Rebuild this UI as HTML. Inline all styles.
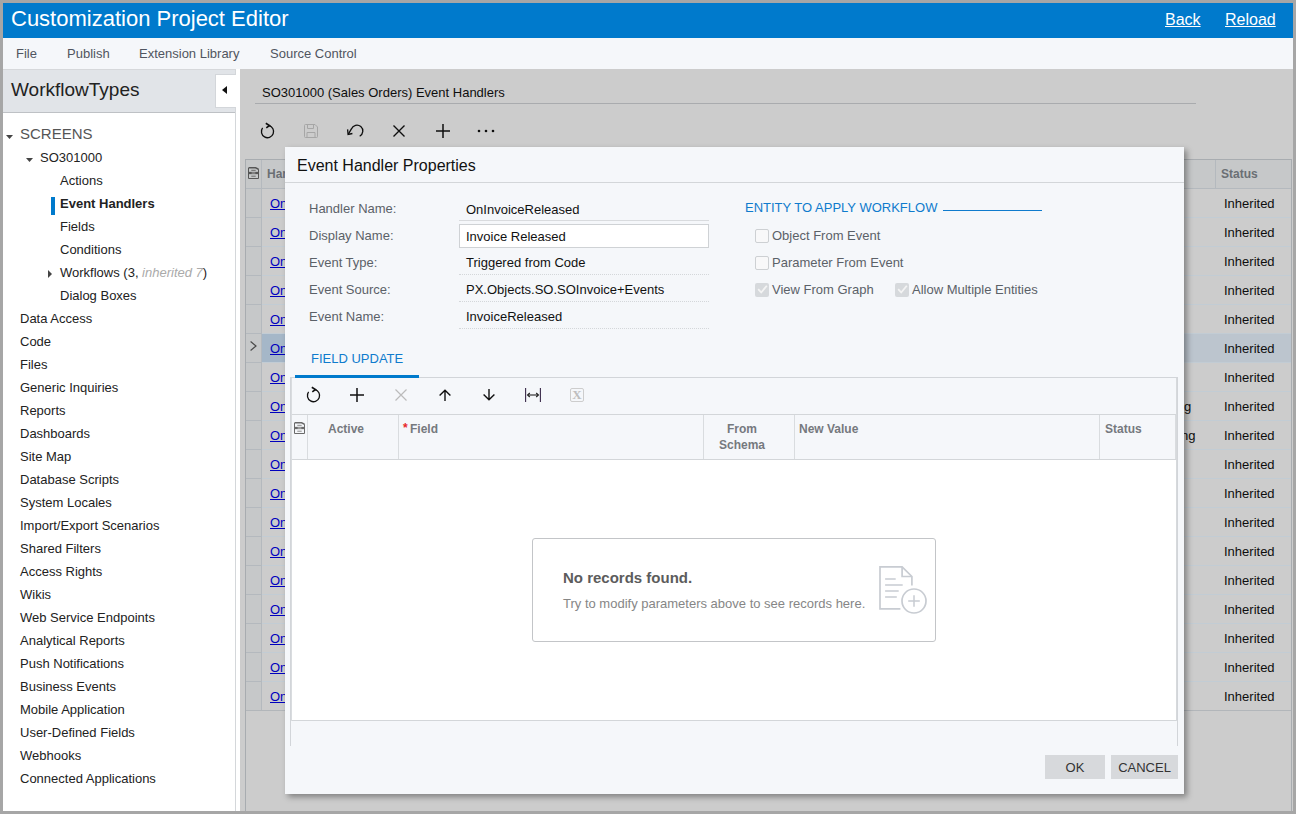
<!DOCTYPE html>
<html>
<head>
<meta charset="utf-8">
<title>Customization Project Editor</title>
<style>
*{box-sizing:border-box;margin:0;padding:0}
html,body{width:1296px;height:814px;overflow:hidden;background:#a6a6a6;font-family:"Liberation Sans",sans-serif;font-size:13px;color:#222}
div,span,a{position:absolute;white-space:nowrap}
svg{position:absolute;overflow:visible}
#app{left:3px;top:3px;width:1290px;height:808px;background:#fff;overflow:hidden}
#hdr{left:0;top:0;width:1290px;height:35px;background:#007acc;color:#fff}
#hdr .t{left:8px;top:3px;font-size:22px;line-height:26px}
#hdr a{top:7px;font-size:16px;line-height:20px;color:#fff;text-decoration:underline}
#menu{left:0;top:35px;width:1290px;height:31px;background:#f5f7fa}
#menu span{top:8px;font-size:13px;line-height:15px;color:#505560}
#side{left:0;top:66px;width:233px;height:742px;background:#fff;border-right:1px solid #d4d7da}
#sidehdr{left:0;top:0;width:232px;height:44px;background:#e1e4e8;border-top:1px solid #d6d8db;border-bottom:1px solid #bec1c5}
#sidehdr .t{left:8px;top:8px;font-size:19px;line-height:24px;color:#222}
#collapse{left:212px;top:4px;width:21px;height:34px;background:#fff;border:1px solid #d3d6da;border-right:none}
.tri-l{left:6px;top:11px;width:0;height:0;border-top:4px solid transparent;border-bottom:4px solid transparent;border-right:5px solid #111}
.ti{font-size:13px;line-height:15px;color:#222}
.tri-d{width:0;height:0;border-left:3.5px solid transparent;border-right:3.5px solid transparent;border-top:4px solid #444}
.tri-r{width:0;height:0;border-top:4px solid transparent;border-bottom:4px solid transparent;border-left:4px solid #444}
#split{left:233px;top:66px;width:4px;height:742px;background:#fff}
#main{left:237px;top:66px;width:1053px;height:742px;background:#ccc;overflow:hidden}
#dim{left:237px;top:66px;width:1053px;height:742px;background:rgba(0,0,0,0.2)}

#main .ttl{font-size:13px;line-height:15px;color:#0e0e0e}
.gh{background:#f7f8f9;border-bottom:1px solid #d5d9dd}
.ghc{font-size:12px;font-weight:bold;color:#6a6f74;line-height:14px}
.row{left:6px;width:1045px;height:29px;border-bottom:1px solid #d9e3ea}
.lnk{color:#0000be;text-decoration:underline;font-size:13px;line-height:15px}
.st{font-size:13px;line-height:15px;color:#0e0e0e}

#dlg{left:282px;top:144px;width:899px;height:647px;background:#f5f7fa;box-shadow:3px 3px 6px rgba(0,0,0,.37)}
#dlg .dt{left:12px;top:9px;font-size:16px;line-height:20px;color:#111}
.lbl{font-size:13px;line-height:15px;color:#5b6168}
.val{font-size:13px;line-height:15px;color:#111}
.cb{width:14px;height:14px;border:1px solid #cdd0d3;border-radius:2px;background:#f8f8f9}
.cbd{width:14px;height:14px;border-radius:2px;background:#d6d9dc}
.hc{font-size:12px;font-weight:bold;color:#75797e;line-height:16px}
.btn{height:24px;background:#d7d9dc;font-size:13px;line-height:26px;color:#333;text-align:center}
</style>
</head>
<body>
<div id="app">
<div id="hdr"><div class="t">Customization Project Editor</div><a style="left:1162px">Back</a><a style="left:1222px">Reload</a></div>
<div id="menu"><span style="left:13px">File</span><span style="left:64px">Publish</span><span style="left:136px">Extension Library</span><span style="left:267px">Source Control</span></div>
<div id="side"><div id="sidehdr"><div class="t">WorkflowTypes</div><div id="collapse"><div class="tri-l"></div></div></div></div>
<svg style="left:3px;top:132px" width="7" height="4" viewBox="0 0 7 4"><path d="M0 0H7L3.5 4Z" fill="#444"/></svg>
<div class="ti" style="left:17px;top:122px;font-size:15px;line-height:17px;color:#555">SCREENS</div>
<svg style="left:23px;top:155px" width="7" height="4" viewBox="0 0 7 4"><path d="M0 0H7L3.5 4Z" fill="#444"/></svg>
<div class="ti " style="left:37px;top:147px;">SO301000</div>
<div class="ti " style="left:57px;top:170px;">Actions</div>
<div style="left:48px;top:194px;width:4px;height:18px;background:#007acc"></div>
<div class="ti " style="left:57px;top:193px;font-weight:bold">Event Handlers</div>
<div class="ti " style="left:57px;top:216px;">Fields</div>
<div class="ti " style="left:57px;top:239px;">Conditions</div>
<div class="tri-r" style="left:45px;top:267px"></div>
<div class="ti " style="left:57px;top:262px;">Workflows (3, <i style="color:#aaa">inherited 7</i>)</div>
<div class="ti " style="left:57px;top:285px;">Dialog Boxes</div>
<div class="ti " style="left:17px;top:308px;">Data Access</div>
<div class="ti " style="left:17px;top:331px;">Code</div>
<div class="ti " style="left:17px;top:354px;">Files</div>
<div class="ti " style="left:17px;top:377px;">Generic Inquiries</div>
<div class="ti " style="left:17px;top:400px;">Reports</div>
<div class="ti " style="left:17px;top:423px;">Dashboards</div>
<div class="ti " style="left:17px;top:446px;">Site Map</div>
<div class="ti " style="left:17px;top:469px;">Database Scripts</div>
<div class="ti " style="left:17px;top:492px;">System Locales</div>
<div class="ti " style="left:17px;top:515px;">Import/Export Scenarios</div>
<div class="ti " style="left:17px;top:538px;">Shared Filters</div>
<div class="ti " style="left:17px;top:561px;">Access Rights</div>
<div class="ti " style="left:17px;top:584px;">Wikis</div>
<div class="ti " style="left:17px;top:607px;">Web Service Endpoints</div>
<div class="ti " style="left:17px;top:630px;">Analytical Reports</div>
<div class="ti " style="left:17px;top:653px;">Push Notifications</div>
<div class="ti " style="left:17px;top:676px;">Business Events</div>
<div class="ti " style="left:17px;top:699px;">Mobile Application</div>
<div class="ti " style="left:17px;top:722px;">User-Defined Fields</div>
<div class="ti " style="left:17px;top:745px;">Webhooks</div>
<div class="ti " style="left:17px;top:768px;">Connected Applications</div>
<div id="split"></div>
<div id="main">
<div class="ttl" style="left:22px;top:16px">SO301000 (Sales Orders) Event Handlers</div>
<div style="left:15px;top:34px;width:941px;height:1px;background:#a9abae"></div>
<svg style="left:20px;top:54px" width="16" height="16" viewBox="0 0 16 16" fill="none" stroke="#0e0e0e" stroke-width="1.3"><path d="M8.98 2.68 A6.1 6.1 0 1 1 2.59 4.98"/><path d="M5.8 0.3 L9.5 2.5 L6.3 4.8" stroke-width="1.6" stroke-linejoin="miter"/></svg>
<svg style="left:64px;top:55px" width="14" height="14" viewBox="0 0 14 14" fill="none" stroke="#a6a6a6" stroke-width="1"><path d="M0.5 1.5Q0.5 0.5 1.5 0.5H11L13.5 3V12.5Q13.5 13.5 12.5 13.5H1.5Q0.5 13.5 0.5 12.5Z"/><path d="M3.5 0.5V4.5H9.5V0.5M3 13.5V8.5H11V13.5"/></svg>
<svg style="left:107px;top:55px" width="17" height="14" viewBox="0 0 17 14" fill="none" stroke="#0e0e0e" stroke-width="1.3"><path d="M1.2 10.4 L4.4 4.9 A5.9 5.9 0 1 1 12.7 12.2"/><path d="M0.6 5.4 L1.1 10.5 L5.4 9.5"/></svg>
<svg style="left:153px;top:56px" width="12" height="12" viewBox="0 0 12 12" stroke="#0e0e0e" stroke-width="1.35"><path d="M0.5 0.5L11.5 11.5M11.5 0.5L0.5 11.5"/></svg>
<svg style="left:196px;top:55px" width="14" height="14" viewBox="0 0 14 14" stroke="#0e0e0e" stroke-width="1.5"><path d="M7 0V14M0 7H14"/></svg>
<svg style="left:237px;top:60px" width="18" height="4" viewBox="0 0 18 4" fill="#0e0e0e"><circle cx="2" cy="2" r="1.3"/><circle cx="9" cy="2" r="1.3"/><circle cx="16" cy="2" r="1.3"/></svg>
<div style="left:5px;top:90px;width:1047px;height:660px;border:1px solid #a8acb0;border-bottom:none"></div>
<div style="left:6px;top:91px;width:1045px;height:28px;background:#c6c8c9"></div>
<div style="left:6px;top:119px;width:15px;height:522px;background:#c6c8c9"></div>
<div style="left:6px;top:119px;width:1045px;height:1px;background:#b4b9be"></div>
<svg style="left:8px;top:98px" width="11" height="12" viewBox="0 0 11 12" fill="none" stroke="#565656"><path d="M0.5 1V11.5H10.5V2.2" stroke-width="1"/><path d="M0.5 0.8H7.6L10.5 2.2" stroke-width="1.5"/><path d="M0.5 6H10.5" stroke-width="2.3"/><path d="M3.6 6H7.4" stroke-width="0.8" stroke="#c0c0c0"/><path d="M3.3 3.3H7.7M3.3 9.2H7.7" stroke-width="1" stroke="#6a6a6a"/></svg>
<div class="ghc" style="left:27px;top:98px">Handler Name</div>
<div class="ghc" style="left:981px;top:98px">Status</div>
<div style="left:22px;top:148px;width:1029px;height:1px;background:#c2ccd4"></div>
<div style="left:6px;top:148px;width:15px;height:1px;background:#b4b9be"></div>
<div class="lnk" style="left:30px;top:127px">OnInvoiceReleased</div>
<div class="st" style="left:984px;top:127px">Inherited</div>
<div style="left:22px;top:177px;width:1029px;height:1px;background:#c2ccd4"></div>
<div style="left:6px;top:177px;width:15px;height:1px;background:#b4b9be"></div>
<div class="lnk" style="left:30px;top:156px">OnInvoiceReleased</div>
<div class="st" style="left:984px;top:156px">Inherited</div>
<div style="left:22px;top:206px;width:1029px;height:1px;background:#c2ccd4"></div>
<div style="left:6px;top:206px;width:15px;height:1px;background:#b4b9be"></div>
<div class="lnk" style="left:30px;top:185px">OnInvoiceReleased</div>
<div class="st" style="left:984px;top:185px">Inherited</div>
<div style="left:22px;top:235px;width:1029px;height:1px;background:#c2ccd4"></div>
<div style="left:6px;top:235px;width:15px;height:1px;background:#b4b9be"></div>
<div class="lnk" style="left:30px;top:214px">OnInvoiceReleased</div>
<div class="st" style="left:984px;top:214px">Inherited</div>
<div style="left:22px;top:264px;width:1029px;height:1px;background:#c2ccd4"></div>
<div style="left:6px;top:264px;width:15px;height:1px;background:#b4b9be"></div>
<div class="lnk" style="left:30px;top:243px">OnInvoiceReleased</div>
<div class="st" style="left:984px;top:243px">Inherited</div>
<div style="left:22px;top:265px;width:1029px;height:28px;background:#bcc5ce"></div>
<div style="left:22px;top:265px;width:200px;height:28px;background:#a5b7c8"></div>
<div style="left:22px;top:293px;width:1029px;height:1px;background:#c2ccd4"></div>
<div style="left:6px;top:293px;width:15px;height:1px;background:#b4b9be"></div>
<div class="lnk" style="left:30px;top:272px">OnInvoiceReleased</div>
<div class="st" style="left:984px;top:272px">Inherited</div>
<div style="left:22px;top:322px;width:1029px;height:1px;background:#c2ccd4"></div>
<div style="left:6px;top:322px;width:15px;height:1px;background:#b4b9be"></div>
<div class="lnk" style="left:30px;top:301px">OnInvoiceReleased</div>
<div class="st" style="left:984px;top:301px">Inherited</div>
<div style="left:22px;top:351px;width:1029px;height:1px;background:#c2ccd4"></div>
<div style="left:6px;top:351px;width:15px;height:1px;background:#b4b9be"></div>
<div class="lnk" style="left:30px;top:330px">OnInvoiceReleased</div>
<div class="st" style="left:984px;top:330px">Inherited</div>
<div class="st" style="left:944px;top:330px">g</div>
<div style="left:22px;top:380px;width:1029px;height:1px;background:#c2ccd4"></div>
<div style="left:6px;top:380px;width:15px;height:1px;background:#b4b9be"></div>
<div class="lnk" style="left:30px;top:359px">OnInvoiceReleased</div>
<div class="st" style="left:984px;top:359px">Inherited</div>
<div class="st" style="left:941px;top:359px">ng</div>
<div style="left:22px;top:409px;width:1029px;height:1px;background:#c2ccd4"></div>
<div style="left:6px;top:409px;width:15px;height:1px;background:#b4b9be"></div>
<div class="lnk" style="left:30px;top:388px">OnInvoiceReleased</div>
<div class="st" style="left:984px;top:388px">Inherited</div>
<div style="left:22px;top:438px;width:1029px;height:1px;background:#c2ccd4"></div>
<div style="left:6px;top:438px;width:15px;height:1px;background:#b4b9be"></div>
<div class="lnk" style="left:30px;top:417px">OnInvoiceReleased</div>
<div class="st" style="left:984px;top:417px">Inherited</div>
<div style="left:22px;top:467px;width:1029px;height:1px;background:#c2ccd4"></div>
<div style="left:6px;top:467px;width:15px;height:1px;background:#b4b9be"></div>
<div class="lnk" style="left:30px;top:446px">OnInvoiceReleased</div>
<div class="st" style="left:984px;top:446px">Inherited</div>
<div style="left:22px;top:496px;width:1029px;height:1px;background:#c2ccd4"></div>
<div style="left:6px;top:496px;width:15px;height:1px;background:#b4b9be"></div>
<div class="lnk" style="left:30px;top:475px">OnInvoiceReleased</div>
<div class="st" style="left:984px;top:475px">Inherited</div>
<div style="left:22px;top:525px;width:1029px;height:1px;background:#c2ccd4"></div>
<div style="left:6px;top:525px;width:15px;height:1px;background:#b4b9be"></div>
<div class="lnk" style="left:30px;top:504px">OnInvoiceReleased</div>
<div class="st" style="left:984px;top:504px">Inherited</div>
<div style="left:22px;top:554px;width:1029px;height:1px;background:#c2ccd4"></div>
<div style="left:6px;top:554px;width:15px;height:1px;background:#b4b9be"></div>
<div class="lnk" style="left:30px;top:533px">OnInvoiceReleased</div>
<div class="st" style="left:984px;top:533px">Inherited</div>
<div style="left:22px;top:583px;width:1029px;height:1px;background:#c2ccd4"></div>
<div style="left:6px;top:583px;width:15px;height:1px;background:#b4b9be"></div>
<div class="lnk" style="left:30px;top:562px">OnInvoiceReleased</div>
<div class="st" style="left:984px;top:562px">Inherited</div>
<div style="left:22px;top:612px;width:1029px;height:1px;background:#c2ccd4"></div>
<div style="left:6px;top:612px;width:15px;height:1px;background:#b4b9be"></div>
<div class="lnk" style="left:30px;top:591px">OnInvoiceReleased</div>
<div class="st" style="left:984px;top:591px">Inherited</div>
<div style="left:22px;top:641px;width:1029px;height:1px;background:#c2ccd4"></div>
<div style="left:6px;top:641px;width:15px;height:1px;background:#b4b9be"></div>
<div class="lnk" style="left:30px;top:620px">OnInvoiceReleased</div>
<div class="st" style="left:984px;top:620px">Inherited</div>
<div style="left:6px;top:641px;width:1045px;height:1px;background:#b2b6ba"></div>
<div style="left:21px;top:91px;width:1px;height:550px;background:#b4b9be"></div>
<div style="left:975px;top:91px;width:1px;height:28px;background:#b4b9be"></div>
<svg style="left:10px;top:272px" width="7" height="10" viewBox="0 0 7 10" fill="none" stroke="#4a4a4a" stroke-width="1.2"><path d="M0.6 0.5L6 5L0.6 9.5"/></svg>
</div>
<div id="dlg">
<div class="dt">Event Handler Properties</div>
<div style="left:0;top:35px;width:899px;height:1px;background:#d3d6d9"></div>
<div class="lbl" style="left:24px;top:54px">Handler Name:</div>
<div style="left:174px;top:73px;width:250px;height:1px;background:#d9dbde"></div>
<div class="val" style="left:181px;top:55px">OnInvoiceReleased</div>
<div class="lbl" style="left:24px;top:81px">Display Name:</div>
<div style="left:174px;top:77px;width:250px;height:24px;background:#fff;border:1px solid #cfd2d5"></div>
<div class="val" style="left:181px;top:82px">Invoice Released</div>
<div class="lbl" style="left:24px;top:108px">Event Type:</div>
<div style="left:174px;top:127px;width:250px;height:0;border-top:1px dotted #d4d7da"></div>
<div class="val" style="left:181px;top:108px">Triggered from Code</div>
<div class="lbl" style="left:24px;top:135px">Event Source:</div>
<div style="left:174px;top:154px;width:250px;height:0;border-top:1px dotted #d4d7da"></div>
<div class="val" style="left:181px;top:135px">PX.Objects.SO.SOInvoice+Events</div>
<div class="lbl" style="left:24px;top:162px">Event Name:</div>
<div style="left:174px;top:181px;width:250px;height:0;border-top:1px dotted #d4d7da"></div>
<div class="val" style="left:181px;top:162px">InvoiceReleased</div>
<div class="lbl" style="left:460px;top:53px;color:#0f7bcd;font-size:13px">ENTITY TO APPLY WORKFLOW</div>
<div style="left:658px;top:63px;width:99px;height:1px;background:#0f7bcd"></div>
<div class="cb" style="left:470px;top:82px"></div><div class="lbl" style="left:487px;top:81px">Object From Event</div>
<div class="cb" style="left:470px;top:109px"></div><div class="lbl" style="left:487px;top:108px">Parameter From Event</div>
<div class="cbd" style="left:470px;top:136px"><svg style="left:0;top:0" width="14" height="14" viewBox="0 0 14 14" fill="none" stroke="#f4f4f4" stroke-width="1.8"><path d="M3.2 6.2L6.2 9.5L11.8 2.7"/></svg></div><div class="lbl" style="left:487px;top:135px">View From Graph</div>
<div class="cbd" style="left:610px;top:136px"><svg style="left:0;top:0" width="14" height="14" viewBox="0 0 14 14" fill="none" stroke="#f4f4f4" stroke-width="1.8"><path d="M3.2 6.2L6.2 9.5L11.8 2.7"/></svg></div><div class="lbl" style="left:627px;top:135px">Allow Multiple Entities</div>
<div class="lbl" style="left:26px;top:204px;color:#0f7bcd">FIELD UPDATE</div>
<div style="left:5px;top:230px;width:888px;height:369px;border:1px solid #d2d5d9;border-bottom:none"></div>
<div style="left:6px;top:231px;width:1px;height:343px;background:#d9dcdf"></div>
<div style="left:891px;top:231px;width:1px;height:343px;background:#d6d9dc"></div>
<div style="left:7px;top:267px;width:884px;height:1px;background:#d3d6d9"></div>
<div style="left:7px;top:312px;width:884px;height:262px;background:#fff;border-top:1px solid #d3d6d9;border-bottom:1px solid #d3d6d9"></div>
<div style="left:22px;top:268px;width:1px;height:44px;background:#d9dcdf"></div>
<div style="left:113px;top:268px;width:1px;height:44px;background:#d9dcdf"></div>
<div style="left:418px;top:268px;width:1px;height:44px;background:#d9dcdf"></div>
<div style="left:509px;top:268px;width:1px;height:44px;background:#d9dcdf"></div>
<div style="left:814px;top:268px;width:1px;height:44px;background:#d9dcdf"></div>
<div style="left:890px;top:268px;width:1px;height:44px;background:#d9dcdf"></div>
<div style="left:10px;top:228px;width:124px;height:3px;background:#007acc"></div>
<svg style="left:21px;top:240px" width="16" height="16" viewBox="0 0 16 16" fill="none" stroke="#111" stroke-width="1.3"><path d="M8.98 2.68 A6.1 6.1 0 1 1 2.59 4.98"/><path d="M5.8 0.3 L9.5 2.5 L6.3 4.8" stroke-width="1.6" stroke-linejoin="miter"/></svg>
<svg style="left:65px;top:241px" width="14" height="14" viewBox="0 0 14 14" stroke="#111" stroke-width="1.5"><path d="M7 0V14M0 7H14"/></svg>
<svg style="left:110px;top:242px" width="12" height="12" viewBox="0 0 12 12" stroke="#bbb" stroke-width="1.2"><path d="M0.5 0.5L11.5 11.5M11.5 0.5L0.5 11.5"/></svg>
<svg style="left:154px;top:242px" width="12" height="12" viewBox="0 0 12 12" fill="none" stroke="#111" stroke-width="1.4"><path d="M6 12V1.2M0.6 6.6L6 1.2L11.4 6.6"/></svg>
<svg style="left:198px;top:242px" width="12" height="12" viewBox="0 0 12 12" fill="none" stroke="#111" stroke-width="1.4"><path d="M6 0V10.8M0.6 5.4L6 10.8L11.4 5.4"/></svg>
<svg style="left:240px;top:241px" width="16" height="14" viewBox="0 0 16 14" fill="none" stroke="#222" stroke-width="1.1"><path d="M0.6 0V14M15.4 0V14" stroke="#3a2a4a"/><path d="M3 7H13"/><path d="M4.8 5L2.6 7L4.8 9M11.2 5L13.4 7L11.2 9" stroke-width="1.2"/></svg>
<div style="left:285px;top:241px;width:14px;height:14px;border:1px solid #cdcdcd;border-radius:2px;font-family:'Liberation Serif',serif;font-weight:bold;font-size:13px;line-height:12px;color:#bebebe;text-align:center">X</div>
<svg style="left:9px;top:275px" width="11" height="12" viewBox="0 0 11 12" fill="none" stroke="#6a6a6a"><path d="M0.5 1V11.5H10.5V2.2" stroke-width="1"/><path d="M0.5 0.8H7.6L10.5 2.2" stroke-width="1.5"/><path d="M0.5 6H10.5" stroke-width="2.3"/><path d="M3.6 6H7.4" stroke-width="0.8" stroke="#e4e4e4"/><path d="M3.3 3.3H7.7M3.3 9.2H7.7" stroke-width="1" stroke="#8a8a8a"/></svg>
<div class="hc" style="left:43px;top:274px">Active</div>
<div class="hc" style="left:118px;top:273px;color:#e8262a">*</div>
<div class="hc" style="left:125px;top:274px">Field</div>
<div class="hc" style="left:412px;top:274px;width:90px;text-align:center;white-space:normal">From<br>Schema</div>
<div class="hc" style="left:514px;top:274px">New Value</div>
<div class="hc" style="left:820px;top:274px">Status</div>
<div style="left:247px;top:391px;width:404px;height:104px;border:1px solid #c3c5c8;border-radius:3px;background:#fff"></div>
<div style="left:278px;top:422px;font-size:15px;font-weight:bold;line-height:18px;color:#5c5c5c">No records found.</div>
<div style="left:278px;top:449px;font-size:13px;line-height:15px;color:#868686">Try to modify parameters above to see records here.</div>
<svg style="left:593px;top:419px" width="50" height="48" viewBox="0 0 50 48" fill="none" stroke="#c8ccd2" stroke-width="1.7"><path d="M22.4 42.9H2V0.9H24.1L33.9 10.5V19.5"/><path d="M24.1 0.9V10.5H33.9"/><path d="M7.1 12.9H17.7M7.1 18.9H24.7M7.1 24.9H20.7M7.1 31H18.8" stroke-width="1.5"/><circle cx="36" cy="35" r="12"/><path d="M36 29.2V40.8M30.2 35H41.8" stroke-width="1.5"/></svg>
<div class="btn" style="left:760px;top:608px;width:60px">OK</div>
<div class="btn" style="left:826px;top:608px;width:67px">CANCEL</div>
</div>
</div>
</body>
</html>
